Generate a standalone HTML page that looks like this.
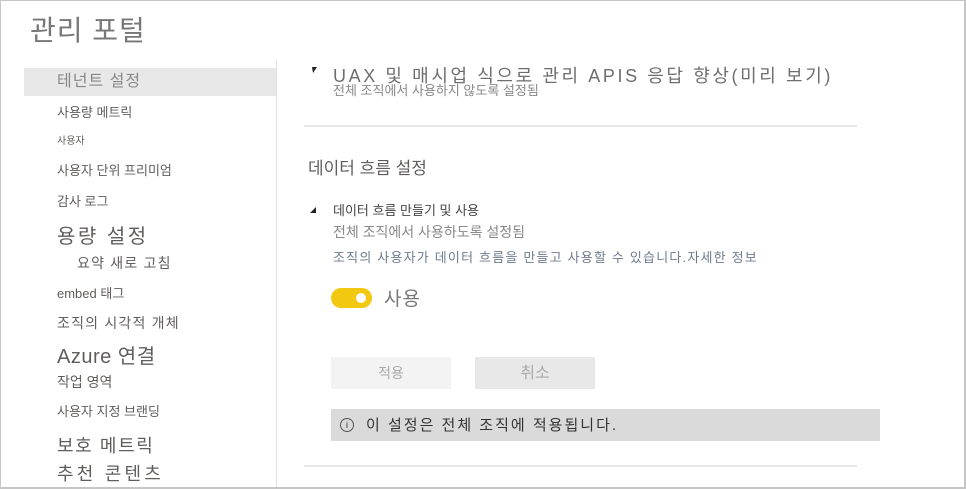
<!DOCTYPE html>
<html><head><meta charset="utf-8"><style>
*{margin:0;padding:0;box-sizing:border-box}
body{width:966px;height:489px;overflow:hidden;background:#fff;font-family:"Liberation Sans","Noto Sans CJK KR",sans-serif;color:#605e5c;position:relative}
.frame{position:absolute;left:0;top:0;width:966px;height:489px;border:1px solid #c6c6c6;border-right:2px solid #c6c6c6;border-bottom:2px solid #c6c6c6}
.a{position:absolute;white-space:nowrap;line-height:1}
.side{position:absolute;left:276px;top:60px;width:1px;height:429px;background:#e1e1e1}
.hl{position:absolute;left:24px;top:68px;width:252px;height:28px;background:#e8e8e8}
.hr{position:absolute;height:2px;background:#e8e8e8}
</style></head><body>
<div class="a" style="left:30px;top:17px;font-size:28px;color:#777;letter-spacing:1px">관리 포털</div>
<div class="hl"></div>
<div class="side"></div>
<div class="a" style="left:57px;top:74px;font-size:16px;color:#888;letter-spacing:1px">테넌트 설정</div>
<div class="a" style="left:57px;top:106px;font-size:13px">사용량 메트릭</div>
<div class="a" style="left:57px;top:137px;font-size:10px">사용자</div>
<div class="a" style="left:57px;top:164px;font-size:13px">사용자 단위 프리미엄</div>
<div class="a" style="left:57px;top:195px;font-size:13px">감사 로그</div>
<div class="a" style="left:57px;top:227px;font-size:20px;letter-spacing:2.5px">용량 설정</div>
<div class="a" style="left:77px;top:256px;font-size:14px;letter-spacing:1.2px">요약 새로 고침</div>
<div class="a" style="left:57px;top:287px;font-size:13px">embed 태그</div>
<div class="a" style="left:57px;top:316px;font-size:14px;letter-spacing:1.2px">조직의 시각적 개체</div>
<div class="a" style="left:57px;top:347px;font-size:20px;letter-spacing:0.5px">Azure 연결</div>
<div class="a" style="left:57px;top:375px;font-size:14px">작업 영역</div>
<div class="a" style="left:57px;top:405px;font-size:13px">사용자 지정 브랜딩</div>
<div class="a" style="left:57px;top:437px;font-size:18px;letter-spacing:1.6px">보호 메트릭</div>
<div class="a" style="left:57px;top:465px;font-size:18px;letter-spacing:3.2px">추천 콘텐츠</div>

<svg style="position:absolute;left:312px;top:67px" width="6" height="7"><polygon points="0,0 5,0 1,6" fill="#222"/></svg>
<div class="a" style="left:333px;top:67px;font-size:18px;color:#6e6e6e;letter-spacing:2.6px">UAX 및 매시업 식으로 관리 APIS 응답 향상(미리 보기)</div>
<div class="a" style="left:333px;top:84px;font-size:13px;color:#888">전체 조직에서 사용하지 않도록 설정됨</div>
<div class="hr" style="left:304px;top:125px;width:553px"></div>
<div class="a" style="left:308px;top:160px;font-size:17px">데이터 흐름 설정</div>
<svg style="position:absolute;left:310px;top:207px" width="7" height="7"><polygon points="6,0 6,6 0,6" fill="#222"/></svg>
<div class="a" style="left:333px;top:204px;font-size:13px;color:#444">데이터 흐름 만들기 및 사용</div>
<div class="a" style="left:333px;top:225px;font-size:14px;color:#888">전체 조직에서 사용하도록 설정됨</div>
<div class="a" style="left:333px;top:251px;font-size:13px;color:#6f7b8d;letter-spacing:1.2px">조직의 사용자가 데이터 흐름을 만들고 사용할 수 있습니다.자세한 정보</div>
<div style="position:absolute;left:331px;top:288px;width:41px;height:20px;border-radius:10px;background:#f2c811"></div>
<div style="position:absolute;left:356px;top:293px;width:10px;height:10px;border-radius:50%;background:#fff"></div>
<div class="a" style="left:384px;top:290px;font-size:19px;color:#777;letter-spacing:1px">사용</div>
<div style="position:absolute;left:331px;top:357px;width:120px;height:32px;background:#f3f3f3;color:#aaa;font-size:14px;text-align:center;line-height:32px">적용</div>
<div style="position:absolute;left:475px;top:357px;width:120px;height:32px;background:#e8e8e8;color:#aaa;font-size:16px;text-align:center;line-height:34px">취소</div>
<div style="position:absolute;left:331px;top:409px;width:549px;height:32px;background:#dadada"></div>
<div style="position:absolute;left:340px;top:418px;width:14px;height:14px;border-radius:50%;border:1px solid #555;font-size:9px;text-align:center;line-height:12px;color:#333">i</div>
<div class="a" style="left:366px;top:418px;font-size:15px;color:#333;letter-spacing:2px">이 설정은 전체 조직에 적용됩니다.</div>
<div class="hr" style="left:304px;top:465px;width:553px"></div>
<div class="frame"></div>
</body></html>
